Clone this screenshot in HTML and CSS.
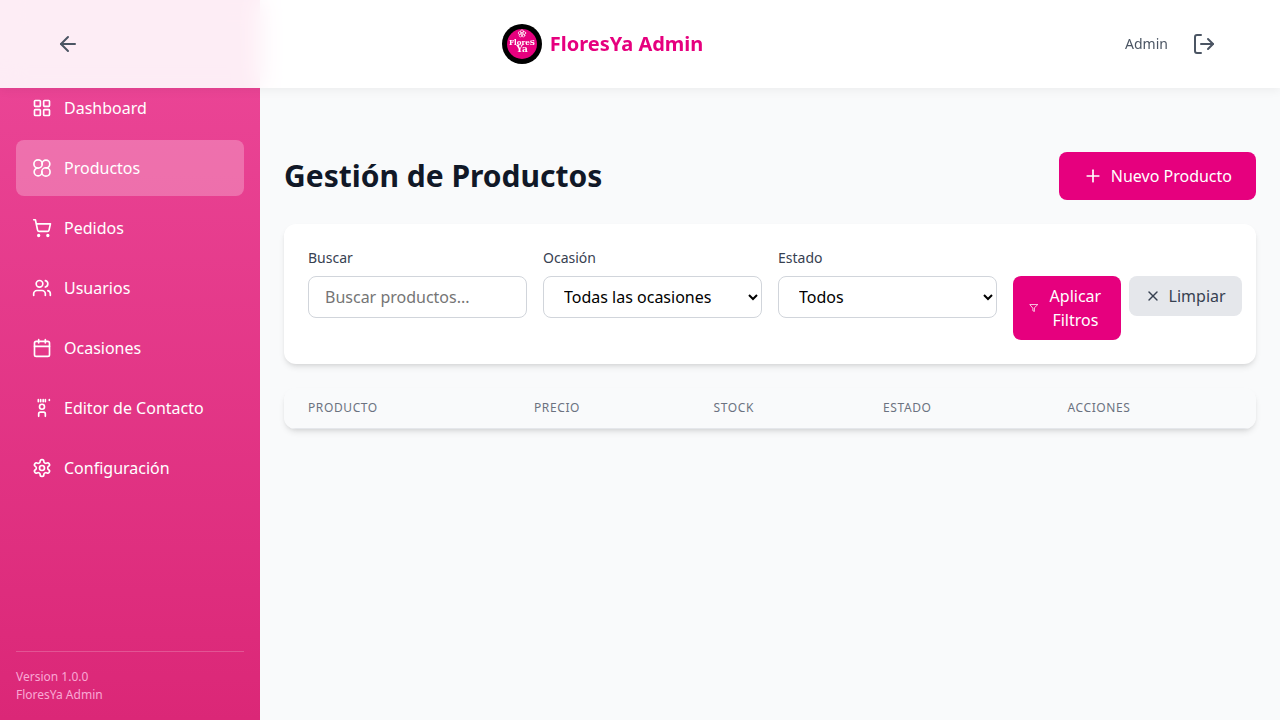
FILE: index.html
```html
<!DOCTYPE html>
<html lang="es">
<head>
<meta charset="utf-8">
<title>FloresYa Admin</title>
<link rel="stylesheet" href="styles.css">
</head>
<body>
<header class="topbar">
  <button class="icon-btn" type="button" aria-label="Volver">
    <svg class="icon-24" viewBox="0 0 24 24"><path d="m12 19-7-7 7-7"/><path d="M19 12H5"/></svg>
  </button>
  <div class="brand">
    <svg class="logo" viewBox="0 0 40 40">
      <circle class="logo-ring" cx="20" cy="20" r="20"/>
      <circle class="logo-disc" cx="20" cy="20" r="15"/>
      <g class="logo-flower">
        <circle cx="20" cy="7.4" r="1.5"/>
        <circle cx="22.2" cy="9" r="1.5"/>
        <circle cx="21.3" cy="11.4" r="1.5"/>
        <circle cx="18.7" cy="11.4" r="1.5"/>
        <circle cx="17.8" cy="9" r="1.5"/>
      </g>
      <text class="logo-text" x="20" y="20.6" textLength="26" lengthAdjust="spacingAndGlyphs">FloreS</text>
      <text class="logo-text logo-text-lg" x="20" y="28.4">Ya</text>
    </svg>
    <span class="brand-name">FloresYa Admin</span>
  </div>
  <div class="user">
    <span class="user-name">Admin</span>
    <svg class="icon-24" viewBox="0 0 24 24"><path d="M9 3H5a2 2 0 0 0-2 2v14a2 2 0 0 0 2 2h4"/><path d="M21 12H9"/><path d="m16 17 5-5-5-5"/></svg>
  </div>
</header>

<div class="shell">
  <aside class="sidebar">
    <nav class="nav">
      <a class="nav-item">
        <svg class="icon-20" viewBox="0 0 24 24"><rect x="3" y="3" width="7" height="7" rx="1"/><rect x="14" y="3" width="7" height="7" rx="1"/><rect x="14" y="14" width="7" height="7" rx="1"/><rect x="3" y="14" width="7" height="7" rx="1"/></svg>
        Dashboard
      </a>
      <a class="nav-item active">
        <svg class="icon-20" viewBox="0 0 24 24"><circle cx="7.300" cy="7.300" r="5"/><circle cx="16.700" cy="16.700" r="5"/><path d="M12 7.300a4.700 4.700 0 1 1 4.700 4.700"/><path d="M12 16.700a4.700 4.700 0 1 1-4.700-4.700"/></svg>
        Productos
      </a>
      <a class="nav-item">
        <svg class="icon-20" viewBox="0 0 24 24"><circle cx="8" cy="21" r="1"/><circle cx="19" cy="21" r="1"/><path d="M2.050 2.050h2l2.660 12.420a2 2 0 0 0 2 1.580h9.780a2 2 0 0 0 1.950-1.570l1.650-7.430H5.120"/></svg>
        Pedidos
      </a>
      <a class="nav-item">
        <svg class="icon-20" viewBox="0 0 24 24"><path d="M16 21v-2a4 4 0 0 0-4-4H6a4 4 0 0 0-4 4v2"/><circle cx="9" cy="7" r="4"/><path d="M22 21v-2a4 4 0 0 0-3-3.870"/><path d="M16 3.130a4 4 0 0 1 0 7.750"/></svg>
        Usuarios
      </a>
      <a class="nav-item">
        <svg class="icon-20" viewBox="0 0 24 24"><path d="M8 2v4"/><path d="M16 2v4"/><rect x="3" y="4" width="18" height="18" rx="2"/><path d="M3 10h18"/></svg>
        Ocasiones
      </a>
      <a class="nav-item">
        <svg class="icon-20" viewBox="0 0 24 24"><circle cx="12" cy="10.500" r="3"/><path d="M8 22v-3a2 2 0 0 1 2-2h4a2 2 0 0 1 2 2v3"/><path d="M7.600 2v2.500"/><path d="M10.400 2v2.500"/><path d="M13.400 2v2.500"/><path d="M16 2v2.500"/><path d="M20.800 2v1"/></svg>
        Editor de Contacto
      </a>
      <a class="nav-item">
        <svg class="icon-20" viewBox="0 0 24 24"><path d="M12.220 2h-.44a2 2 0 0 0-2 2v.18a2 2 0 0 1-1 1.730l-.43.25a2 2 0 0 1-2 0l-.15-.08a2 2 0 0 0-2.730.73l-.22.38a2 2 0 0 0 .73 2.730l.15.1a2 2 0 0 1 1 1.720v.51a2 2 0 0 1-1 1.740l-.15.09a2 2 0 0 0-.73 2.730l.22.38a2 2 0 0 0 2.730.73l.15-.08a2 2 0 0 1 2 0l.43.25a2 2 0 0 1 1 1.730V20a2 2 0 0 0 2 2h.44a2 2 0 0 0 2-2v-.18a2 2 0 0 1 1-1.730l.43-.25a2 2 0 0 1 2 0l.15.08a2 2 0 0 0 2.730-.73l.22-.39a2 2 0 0 0-.73-2.730l-.15-.08a2 2 0 0 1-1-1.740v-.5a2 2 0 0 1 1-1.740l.15-.09a2 2 0 0 0 .73-2.730l-.22-.38a2 2 0 0 0-2.730-.73l-.15.08a2 2 0 0 1-2 0l-.43-.25a2 2 0 0 1-1-1.730V4a2 2 0 0 0-2-2z"/><circle cx="12" cy="12" r="3"/></svg>
        Configuración
      </a>
    </nav>
    <footer class="side-foot">
      <p>Version 1.0.0</p>
      <p>FloresYa Admin</p>
    </footer>
  </aside>

  <main class="main">
    <div class="page-head">
      <h1 class="page-title">Gestión de Productos</h1>
      <button class="btn btn-primary btn-lg" type="button">
        <svg class="icon-20" viewBox="0 0 24 24"><path d="M5 12h14"/><path d="M12 5v14"/></svg>
        Nuevo Producto
      </button>
    </div>

    <section class="filters">
      <div class="field">
        <label class="label">Buscar</label>
        <input class="control" type="text" placeholder="Buscar productos...">
      </div>
      <div class="field">
        <label class="label">Ocasión</label>
        <select class="control"><option>Todas las ocasiones</option></select>
      </div>
      <div class="field">
        <label class="label">Estado</label>
        <select class="control"><option>Todos</option></select>
      </div>
      <div class="actions">
        <button class="btn btn-primary" type="button">
          <svg class="icon-shrink" viewBox="0 0 24 24"><path d="M22 3H2l8 9.460V19l4 2v-8.540z"/></svg>
          <span>Aplicar Filtros</span>
        </button>
        <button class="btn btn-muted" type="button">
          <svg class="icon-16" viewBox="0 0 24 24"><path d="M18 6 6 18"/><path d="m6 6 12 12"/></svg>
          Limpiar
        </button>
      </div>
    </section>

    <section class="table-card">
      <table class="table">
        <thead>
          <tr>
            <th class="col-product">Producto</th>
            <th class="col-price">Precio</th>
            <th class="col-stock">Stock</th>
            <th class="col-status">Estado</th>
            <th>Acciones</th>
          </tr>
        </thead>
      </table>
    </section>
  </main>
</div>
</body>
</html>
```

FILE: styles.css
```css
* { box-sizing: border-box; }

html, body { height: 100%; }

body {
  margin: 0;
  background: #f9fafb;
  color: #111827;
  font-family: "Noto Sans", sans-serif;
  font-size: 16px;
  line-height: 24px;
  overflow: hidden;
}

svg {
  fill: none;
  stroke: currentColor;
  stroke-width: 2;
  stroke-linecap: round;
  stroke-linejoin: round;
}

.icon-24 { width: 24px; height: 24px; flex: none; }
.icon-20 { width: 20px; height: 20px; flex: none; }
.icon-16 { width: 16px; height: 16px; flex: none; }
.icon-shrink { width: 16px; height: 16px; flex: 0 1 auto; min-width: 0; }

/* Top bar floats over the sidebar */
.topbar {
  position: fixed;
  top: 0;
  left: 0;
  right: 0;
  z-index: 10;
  height: 88px;
  padding: 0 64px 0 56px;
  display: flex;
  align-items: center;
  justify-content: space-between;
  background: rgba(255, 255, 255, 0.9);
  backdrop-filter: blur(12px);
  box-shadow: 0 2px 10px rgba(0, 0, 0, 0.06);
}

.icon-btn {
  padding: 0;
  border: 0;
  background: none;
  color: #4b5563;
  display: flex;
}

.brand {
  display: flex;
  align-items: center;
  gap: 8px;
}

.logo { width: 40px; height: 40px; stroke: none; }
.logo-ring { fill: #000; }
.logo-disc { fill: #e6007e; }
.logo-flower { fill: none; stroke: #fff; stroke-width: 0.7; }
.logo-text {
  fill: #fff;
  font-family: "DejaVu Serif", serif;
  font-size: 8px;
  font-weight: 700;
  text-anchor: middle;
}
.logo-text-lg { font-size: 9px; }

.brand-name {
  color: #e6007e;
  font-size: 20px;
  line-height: 28px;
  font-weight: 700;
}

.user {
  display: flex;
  align-items: center;
  gap: 24px;
  color: #4b5563;
}

.user-name { font-size: 14px; line-height: 20px; }

/* Shell */
.shell {
  display: flex;
  height: 100vh;
}

.sidebar {
  width: 260px;
  flex: none;
  padding-top: 80px;
  display: flex;
  flex-direction: column;
  color: #fff;
  background: linear-gradient(180deg, #ec4899 0%, #db2777 100%);
}

.nav {
  flex: 1;
  padding: 0 16px;
  display: flex;
  flex-direction: column;
  gap: 4px;
}

.nav-item {
  display: flex;
  align-items: center;
  gap: 12px;
  padding: 16px;
  border-radius: 8px;
}

.nav-item.active { background: rgba(255, 255, 255, 0.25); }

.side-foot {
  margin: 0 16px;
  padding: 16px 0;
  border-top: 1px solid rgba(255, 255, 255, 0.2);
  color: #f9a8d4;
  font-size: 12px;
  line-height: 18px;
}

.side-foot p { margin: 0; }

/* Main */
.main {
  flex: 1;
  min-width: 0;
  padding: 152px 24px 24px;
}

.page-head {
  display: flex;
  align-items: center;
  justify-content: space-between;
  margin-bottom: 24px;
}

.page-title {
  margin: 0;
  font-size: 30px;
  line-height: 36px;
  font-weight: 700;
}

.btn {
  display: flex;
  align-items: center;
  gap: 8px;
  padding: 8px 16px;
  border: 0;
  border-radius: 8px;
  font: inherit;
}

.btn-lg { padding: 12px 24px; }
.btn-primary { background: #e6007e; color: #fff; }
.btn-muted { background: #e5e7eb; color: #374151; white-space: nowrap; flex: none; }

/* Filters */
.filters {
  display: grid;
  grid-template-columns: repeat(4, 1fr);
  gap: 16px;
  padding: 24px;
  margin-bottom: 24px;
  background: #fff;
  border-radius: 12px;
  box-shadow: 0 4px 6px -1px rgba(0, 0, 0, 0.1), 0 2px 4px -2px rgba(0, 0, 0, 0.1);
}

.label {
  display: block;
  margin-bottom: 8px;
  color: #374151;
  font-size: 14px;
  line-height: 20px;
}

.control {
  display: block;
  width: 100%;
  height: 42px;
  padding: 8px 16px;
  border: 1px solid #d1d5db;
  border-radius: 8px;
  background: #fff;
  color: #000;
  font: inherit;
}

.control::placeholder { color: #757575; }

.actions {
  display: flex;
  align-items: flex-start;
  gap: 8px;
  min-width: 0;
  padding-top: 28px;
}

/* Table */
.table-card {
  border-radius: 12px;
  overflow: hidden;
  box-shadow: 0 4px 6px -1px rgba(0, 0, 0, 0.1), 0 2px 4px -2px rgba(0, 0, 0, 0.1);
}

.table {
  width: 100%;
  border-collapse: collapse;
  table-layout: fixed;
}

.table th {
  padding: 12px 24px;
  border-bottom: 1px solid #e5e7eb;
  background: #f9fafb;
  color: #6b7280;
  font-size: 12px;
  line-height: 16px;
  font-weight: 400;
  letter-spacing: 0.05em;
  text-align: left;
  text-transform: uppercase;
}

.col-product { width: 226px; }
.col-price { width: 179.5px; }
.col-stock { width: 169.5px; }
.col-status { width: 184.5px; }
```
